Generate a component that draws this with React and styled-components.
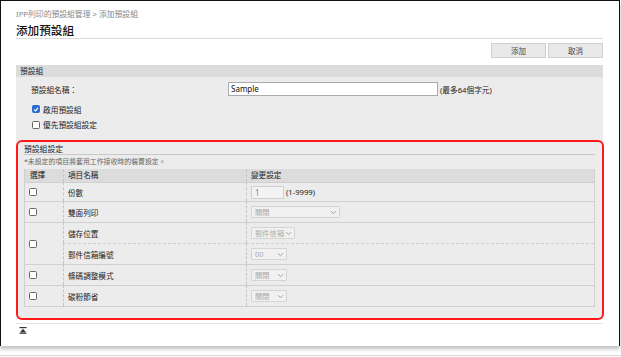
import React from "react";
import styled, { createGlobalStyle } from "styled-components";

const Global = createGlobalStyle`
  html, body { margin: 0; padding: 0; background: #fff; }
  body { font-family: "Noto Sans", "Noto Sans CJK TC", sans-serif; color: #333; }
  * { box-sizing: border-box; }
`;

const Stage = styled.div`
  width: 621px;
  height: 357px;
  position: relative;
  overflow: hidden;
  background: #fff;
`;

const Win = styled.div`
  width: 620px;
  height: 346px;
  border: 1px solid #111;
  border-bottom: none;
  background: #fff;
  box-shadow: 0 3px 4px rgba(0, 0, 0, 0.25);
  padding: 7px 16px 0 15px;
  display: flex;
  flex-direction: column;
`;

const BottomLine = styled.div`
  position: absolute;
  left: 0;
  right: 0;
  top: 355px;
  height: 1px;
  background: #d8d8d8;
`;

const Crumb = styled.div`
  font-size: 7.8px;
  line-height: 12px;
  color: #888;
  height: 12px;
  white-space: nowrap;
`;

const Title = styled.h1`
  margin: 4px 0 0;
  font-size: 11.6px;
  font-weight: 500;
  line-height: 14px;
  height: 15px;
  color: #111;
  border-bottom: 1px solid #dcdcdc;
`;

const Toolbar = styled.div`
  display: flex;
  justify-content: flex-end;
  gap: 2px;
  margin-top: 4px;
  height: 15px;
`;

const Btn = styled.button`
  width: 55px;
  height: 15px;
  border: 1px solid #d0d0d0;
  background: #e9e9e9;
  font: inherit;
  font-size: 7.5px;
  color: #444;
  padding: 0;
`;

const Panel = styled.div`
  margin-top: 7px;
  background: #ececec;
  position: relative;
  height: 254px;
  display: flex;
  flex-direction: column;
`;

const PanelHead = styled.div`
  background: #dcdcdc;
  height: 12px;
  font-size: 7.7px;
  line-height: 12px;
  padding-left: 4px;
  color: #222;
`;

const FormRow = styled.div`
  display: flex;
  align-items: center;
  height: ${(p) => p.$h || 16}px;
  font-size: 7.7px;
  color: #222;
  padding-left: ${(p) => p.$indent || 15}px;
  margin-top: ${(p) => p.$mt || 0}px;
  white-space: nowrap;
`;

const Label = styled.span`
  width: 197px;
`;

const TextInput = styled.div`
  width: 210px;
  height: 14px;
  border: 1px solid #aaa;
  background: #fff;
  font-size: 8px;
  line-height: 12px;
  padding-left: 2px;
  color: #111;
`;

const Hint = styled.span`
  margin-left: 2px;
  font-size: 7.7px;
  white-space: nowrap;
`;

const Check = styled.span`
  width: 8px;
  height: 8px;
  border: 1px solid ${(p) => (p.$on ? "#2a6fd0" : "#666")};
  background: ${(p) => (p.$on ? "#2a6fd0" : "#fff")};
  border-radius: 1.5px;
  display: inline-flex;
  align-items: center;
  justify-content: center;
  margin-right: 3px;
  flex-shrink: 0;
`;

const Section = styled.div`
  margin-top: 12px;
  padding: 0 8px 0 8px;
`;

const SecTitle = styled.div`
  font-size: 7.8px;
  line-height: 10px;
  height: 11px;
  color: #222;
  border-bottom: 1px solid #c8c8c8;
`;

const Note = styled.div`
  font-size: 6.9px;
  color: #666;
  line-height: 11px;
  margin-top: 1px;
  white-space: nowrap;
`;

const Table = styled.div`
  margin-top: 2px;
  border: 1px solid #d0d0d0;
  border-top: none;
  display: grid;
  grid-template-columns: 38px 183px 1fr;
  font-size: 7.6px;
  color: #222;
`;

const HeadCell = styled.div`
  background: #dcdcdc;
  height: 13px;
  line-height: 13px;
  padding-left: ${(p) => (p.$first ? 5 : 4)}px;
  border-left: ${(p) => (p.$first ? "none" : "1px dashed #c4c4c4")};
`;

const Cell = styled.div`
  height: ${(p) => p.$h || 21}px;
  display: flex;
  align-items: center;
  padding-left: 4px;
  border-top: 1px ${(p) => (p.$dashed ? "dashed #cfcfcf" : "solid #d0d0d0")};
  border-left: ${(p) => (p.$first ? "none" : "1px dashed #c4c4c4")};
  white-space: nowrap;
  ${(p) => (p.$span ? `grid-row: span ${p.$span};` : "")}
`;

const NumBox = styled.div`
  width: 33px;
  height: 13px;
  border: 1px solid #cfcfcf;
  background: #f3f3f3;
  color: #888;
  font-size: 8px;
  line-height: 11px;
  padding-left: 3px;
`;

const Select = styled.div`
  width: ${(p) => p.$w}px;
  height: 12px;
  border: 1px solid #d4d4d4;
  background: #f1f1f1;
  color: #aaa;
  font-size: 7.3px;
  display: flex;
  align-items: center;
  justify-content: space-between;
  padding: 0 2px 0 3px;
  border-radius: 1px;
  white-space: nowrap;
  overflow: hidden;
`;

const RedBox = styled.div`
  position: absolute;
  left: 0;
  top: 75px;
  width: 588px;
  height: 180px;
  border: 2px solid #ff1a1a;
  border-radius: 6px;
  pointer-events: none;
`;

const Footer = styled.div`
  margin-top: 4px;
  border-top: 1px solid #e4e4e4;
  padding: 3px 0 0 3px;
  line-height: 0;
`;

const Chev = () => (
  <svg width="7" height="5" viewBox="0 0 7 5">
    <path d="M1 1.2 L3.5 3.7 L6 1.2" fill="none" stroke="#999" strokeWidth="0.9" />
  </svg>
);

const Tick = () => (
  <svg width="7" height="7" viewBox="0 0 7 7">
    <path d="M1.2 3.6 L2.9 5.2 L5.9 1.6" fill="none" stroke="#fff" strokeWidth="1.3" />
  </svg>
);

export default function App() {
  return (
    <Stage>
      <Global />
      <Win>
        <Crumb>IPP列印的預設組管理 &gt; 添加預設組</Crumb>
        <Title>添加預設組</Title>
        <Toolbar>
          <Btn>添加</Btn>
          <Btn>取消</Btn>
        </Toolbar>
        <Panel>
          <PanelHead>預設組</PanelHead>
          <FormRow $mt={4}>
            <Label>預設組名稱：</Label>
            <TextInput>Sample</TextInput>
            <Hint>(最多64個字元)</Hint>
          </FormRow>
          <FormRow $mt={4} $indent={16}>
            <Check $on><Tick /></Check>啟用預設組
          </FormRow>
          <FormRow $h={15} $indent={16}>
            <Check />優先預設組設定
          </FormRow>
          <Section>
            <SecTitle>預設組設定</SecTitle>
            <Note>*未設定的項目將套用工作接收時的裝置設定。</Note>
            <Table>
              <HeadCell $first>選擇</HeadCell>
              <HeadCell>項目名稱</HeadCell>
              <HeadCell>變更設定</HeadCell>

              <Cell $first $h={19}><Check /></Cell>
              <Cell $h={19}>份數</Cell>
              <Cell $h={19}><NumBox>1</NumBox><Hint>(1-9999)</Hint></Cell>

              <Cell $first><Check /></Cell>
              <Cell>雙面列印</Cell>
              <Cell><Select $w={89}>關閉<Chev /></Select></Cell>

              <Cell $first $span={2} $h={42}><Check /></Cell>
              <Cell>儲存位置</Cell>
              <Cell><Select $w={44}>郵件信箱<Chev /></Select></Cell>
              <Cell $dashed>郵件信箱編號</Cell>
              <Cell $dashed><Select $w={36}>00<Chev /></Select></Cell>

              <Cell $first><Check /></Cell>
              <Cell>條碼調整模式</Cell>
              <Cell><Select $w={36}>關閉<Chev /></Select></Cell>

              <Cell $first><Check /></Cell>
              <Cell>碳粉節省</Cell>
              <Cell><Select $w={36}>關閉<Chev /></Select></Cell>
            </Table>
          </Section>
          <RedBox />
        </Panel>
        <Footer>
          <svg width="8" height="7" viewBox="0 0 8 7">
            <rect x="0.5" y="0" width="7" height="1.2" fill="#333" />
            <path d="M4 1.8 L7.2 5.6 L0.8 5.6 Z" fill="#333" />
            <rect x="0.5" y="5.8" width="7" height="1" fill="#333" />
          </svg>
        </Footer>
      </Win>
      <BottomLine />
    </Stage>
  );
}
